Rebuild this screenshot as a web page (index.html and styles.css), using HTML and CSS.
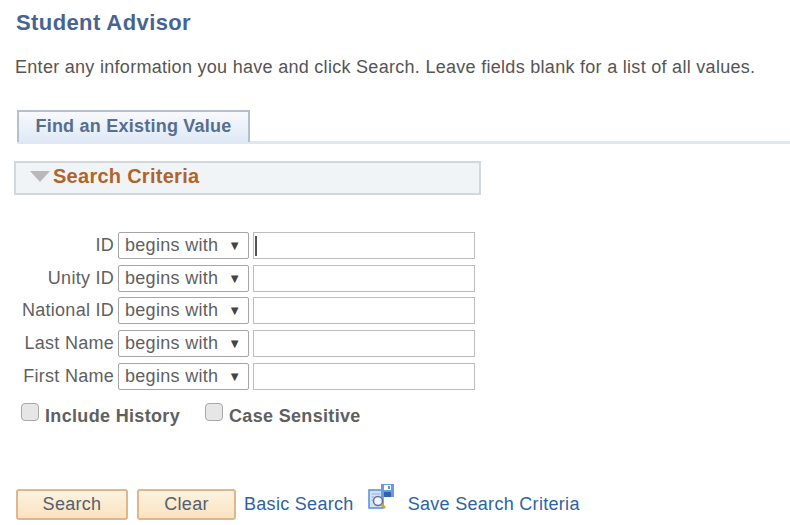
FILE: index.html
```html
<!DOCTYPE html>
<html lang="en">
<head>
    <meta charset="UTF-8">
    <title>Student Advisor</title>
    <link rel="stylesheet" href="styles.css">
</head>
<body>
    <h1 class="title">Student Advisor</h1>
    <p class="intro">Enter any information you have and click Search. Leave fields blank for a list of all values.</p>

    <div class="tabs">
        <div class="tab">Find an Existing Value</div>
    </div>

    <div class="panel-head">
        <span class="arrow"></span>
        <span class="panel-title">Search Criteria</span>
    </div>

    <div class="fields">
        <div class="row">
            <label class="label">ID</label>
            <div class="select"><span>begins with</span><span class="caret">▼</span></div>
            <div class="input"><span class="cursor"></span></div>
        </div>
        <div class="row">
            <label class="label">Unity ID</label>
            <div class="select"><span>begins with</span><span class="caret">▼</span></div>
            <div class="input"></div>
        </div>
        <div class="row">
            <label class="label">National ID</label>
            <div class="select"><span>begins with</span><span class="caret">▼</span></div>
            <div class="input"></div>
        </div>
        <div class="row">
            <label class="label">Last Name</label>
            <div class="select"><span>begins with</span><span class="caret">▼</span></div>
            <div class="input"></div>
        </div>
        <div class="row">
            <label class="label">First Name</label>
            <div class="select"><span>begins with</span><span class="caret">▼</span></div>
            <div class="input"></div>
        </div>
    </div>

    <div class="checks">
        <div class="check"><span class="box"></span><span>Include History</span></div>
        <div class="check"><span class="box"></span><span>Case Sensitive</span></div>
    </div>

    <div class="actions">
        <button class="btn btn-search">Search</button>
        <button class="btn btn-clear">Clear</button>
        <a class="link" href="#">Basic Search</a>
        <svg class="save-icon" width="26" height="26" viewBox="0 0 26 26">
            <rect x="1" y="6" width="14" height="18" fill="#d3e2f6" stroke="#5f94dc" stroke-width="1.6"/>
            <path d="M3.500 10h9M3.500 13h3M3.500 16h3" stroke="#8fb0de" stroke-width="1.2"/>
            <circle cx="10" cy="17" r="4.500" fill="#f0f6fc" stroke="#5f7488" stroke-width="1.5"/>
            <path d="M13.500 20.500l3.500 3.500" stroke="#c9a63c" stroke-width="2.500"/>
            <rect x="13" y="0" width="13" height="13" fill="#6a9bdd"/>
            <rect x="16" y="1" width="7" height="5" fill="#fff"/>
            <rect x="20" y="2" width="2" height="3" fill="#5f94dc"/>
            <rect x="16" y="8" width="7" height="5" fill="#2f62ad"/>
        </svg>
        <a class="link" href="#">Save Search Criteria</a>
    </div>
</body>
</html>
```

FILE: styles.css
```css
body {
    font-family: "Liberation Sans", Arial, sans-serif;
    background-color: #fff;
    color: #444;
    margin: 0;
    padding: 0;
    overflow: hidden;
}
.title {
    font-size: 22px;
    font-weight: bold;
    letter-spacing: 0.4px;
    color: #476490;
    line-height: 24px;
    margin: 0;
    padding: 11px 0 0 16px;
}
.intro {
    font-size: 18px;
    letter-spacing: 0.29px;
    line-height: 20px;
    color: #555;
    margin: 22px 0 0 15px;
    white-space: nowrap;
}
.tabs {
    margin: 33px 0 0 17px;
    border-bottom: 3px solid #dfe7f4;
    height: 31px;
}
.tab {
    box-sizing: border-box;
    width: 233px;
    height: 32px;
    border: 2px solid #b4c0d2;
    border-bottom: none;
    background: linear-gradient(#f7f9fc, #dfe9f6);
    color: #566e8f;
    font-size: 18px;
    letter-spacing: 0.23px;
    font-weight: bold;
    line-height: 28px;
    text-align: center;
}
.panel-head {
    box-sizing: border-box;
    width: 467px;
    height: 34px;
    margin: 17px 0 0 14px;
    border: 2px solid #d2d7dc;
    background-color: #f1f4f6;
    display: flex;
    align-items: center;
    padding: 0 0 4px 14px;
}
.arrow {
    width: 0;
    height: 0;
    border-left: 10px solid transparent;
    border-right: 10px solid transparent;
    border-top: 11px solid #b9b9b9;
    margin-right: 3px;
}
.panel-title {
    font-size: 20px;
    letter-spacing: 0.27px;
    font-weight: bold;
    color: #b0642a;
    line-height: 24px;
}
.fields {
    margin-top: 37px;
    display: flex;
    flex-direction: column;
    gap: 5.7px;
}
.row {
    display: flex;
    align-items: center;
    height: 27px;
}
.label {
    width: 114px;
    text-align: right;
    font-size: 18px;
    letter-spacing: 0.27px;
    color: #5f5f5f;
    margin-right: 4px;
    white-space: nowrap;
}
.select {
    box-sizing: border-box;
    width: 131px;
    height: 27px;
    border: 1px solid #a6a6a6;
    border-radius: 2px;
    display: flex;
    align-items: center;
    justify-content: space-between;
    padding: 0 7px 0 6px;
    font-size: 18px;
    letter-spacing: 0.3px;
    color: #5f5f5f;
    margin-right: 4px;
    white-space: nowrap;
}
.caret {
    font-size: 13px;
    letter-spacing: 0;
    color: #444;
}
.input {
    box-sizing: border-box;
    width: 222px;
    height: 27px;
    border: 1px solid #bdbdbd;
    display: flex;
    align-items: center;
    padding-left: 1px;
}
.cursor {
    width: 2px;
    height: 20px;
    background-color: #555;
}
.checks {
    display: flex;
    margin: 16px 0 0 21px;
}
.check {
    display: flex;
    align-items: center;
    font-size: 18px;
    letter-spacing: 0.33px;
    font-weight: bold;
    color: #5f5f5f;
    margin-right: 25px;
}
.box {
    box-sizing: border-box;
    width: 18px;
    height: 18px;
    border: 1px solid #a8a8a8;
    border-radius: 4px;
    background-color: #e6e6e6;
    margin-right: 6px;
    margin-top: -8px;
}
.actions {
    display: flex;
    align-items: center;
    margin: 62px 0 0 16px;
    height: 31px;
}
.btn {
    box-sizing: border-box;
    height: 31px;
    border: 2px solid #e0b68a;
    border-radius: 3px;
    background: linear-gradient(#fdf3e1, #fae2bf);
    font-family: inherit;
    font-size: 18px;
    letter-spacing: 0.3px;
    color: #55606c;
    padding: 0;
}
.btn-search {
    width: 112px;
    margin-right: 9px;
}
.btn-clear {
    width: 99px;
    margin-right: 8px;
}
.link {
    font-size: 18px;
    letter-spacing: 0.3px;
    color: #2f62a3;
    text-decoration: none;
    white-space: nowrap;
}
.save-icon {
    margin: -14px 14px 0 14px;
}
```
